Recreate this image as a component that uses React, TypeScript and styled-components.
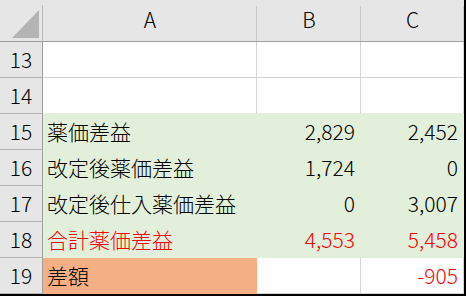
import React from 'react';
import styled, { createGlobalStyle } from 'styled-components';

const GREEN = '#e2efda';
const ORANGE = '#f4b084';
const GRID = '#d4d4d4';
const HEAD_BG = '#e6e6e6';

interface CellData {
  text?: string;
  red?: boolean;
  fill?: string;
}

interface RowData {
  num: number;
  cells: CellData[];
}

const columns = ['A', 'B', 'C'];

const rows: RowData[] = [
  { num: 13, cells: [{}, {}, {}] },
  { num: 14, cells: [{}, {}, {}] },
  {
    num: 15,
    cells: [
      { text: '薬価差益', fill: GREEN },
      { text: '2,829', fill: GREEN },
      { text: '2,452', fill: GREEN },
    ],
  },
  {
    num: 16,
    cells: [
      { text: '改定後薬価差益', fill: GREEN },
      { text: '1,724', fill: GREEN },
      { text: '0', fill: GREEN },
    ],
  },
  {
    num: 17,
    cells: [
      { text: '改定後仕入薬価差益', fill: GREEN },
      { text: '0', fill: GREEN },
      { text: '3,007', fill: GREEN },
    ],
  },
  {
    num: 18,
    cells: [
      { text: '合計薬価差益', fill: GREEN, red: true },
      { text: '4,553', fill: GREEN, red: true },
      { text: '5,458', fill: GREEN, red: true },
    ],
  },
  {
    num: 19,
    cells: [{ text: '差額', fill: ORANGE }, {}, { text: '-905', red: true }],
  },
];

const GlobalStyle = createGlobalStyle`
  body {
    margin: 0;
    background: #fff;
  }
`;

const Sheet = styled.div`
  width: 464px;
  display: grid;
  grid-template-columns: 43px 214px 104px 103px;
  grid-template-rows: 42px;
  grid-auto-rows: 36px;
  border-right: 2px solid #000;
  border-bottom: 2px solid #000;
  font-family: 'Noto Sans CJK JP', 'Noto Sans', sans-serif;
  font-size: 21px;
  font-weight: 300;
  color: #000;
`;

const Corner = styled.div`
  position: relative;
  background: ${HEAD_BG};
  border-bottom: 1px solid #9e9e9e;
  box-sizing: border-box;
  &::after {
    content: '';
    position: absolute;
    top: 5px;
    bottom: 0;
    right: 0;
    width: 1px;
    background: #b8b8b8;
  }
  svg {
    display: block;
  }
`;

const ColHead = styled.div`
  position: relative;
  display: flex;
  align-items: center;
  justify-content: center;
  padding-bottom: 3px;
  background: ${HEAD_BG};
  border-bottom: 1px solid #9e9e9e;
  box-sizing: border-box;
  &::after {
    content: '';
    position: absolute;
    top: 6px;
    bottom: 0;
    right: 0;
    width: 1px;
    background: #c6c6c6;
  }
`;

const RowHead = styled.div`
  display: flex;
  align-items: center;
  justify-content: center;
  padding-bottom: 2px;
  background: ${HEAD_BG};
  border-right: 1px solid #9e9e9e;
  border-bottom: 1px solid #b4b4b4;
  box-sizing: border-box;
`;

const Cell = styled.div<{ $fill?: string; $below?: string; $red?: boolean; $num?: boolean }>`
  display: flex;
  align-items: center;
  justify-content: ${(p) => (p.$num ? 'flex-end' : 'flex-start')};
  padding: 0 5px 2px 4px;
  background: ${(p) => p.$fill || '#fff'};
  border-right: 1px solid ${(p) => p.$fill || GRID};
  border-bottom: 1px solid ${(p) => p.$fill || p.$below || GRID};
  color: ${(p) => (p.$red ? '#ff0000' : '#000')};
  box-sizing: border-box;
  white-space: nowrap;
`;

export default function App() {
  return (
    <>
      <GlobalStyle />
      <Sheet>
        <Corner>
          <svg width="42" height="41" viewBox="0 0 42 41">
            <polygon points="39,10 39,38 12,38" fill="#b4b4b4" />
          </svg>
        </Corner>
        {columns.map((c) => (
          <ColHead key={c}>{c}</ColHead>
        ))}
        {rows.map((row, ri) => (
          <React.Fragment key={row.num}>
            <RowHead>{row.num}</RowHead>
            {row.cells.map((cell, ci) => (
              <Cell
                key={ci}
                $fill={cell.fill}
                $below={rows[ri + 1]?.cells[ci].fill}
                $red={cell.red}
                $num={ci > 0}
              >
                {cell.text}
              </Cell>
            ))}
          </React.Fragment>
        ))}
      </Sheet>
    </>
  );
}
